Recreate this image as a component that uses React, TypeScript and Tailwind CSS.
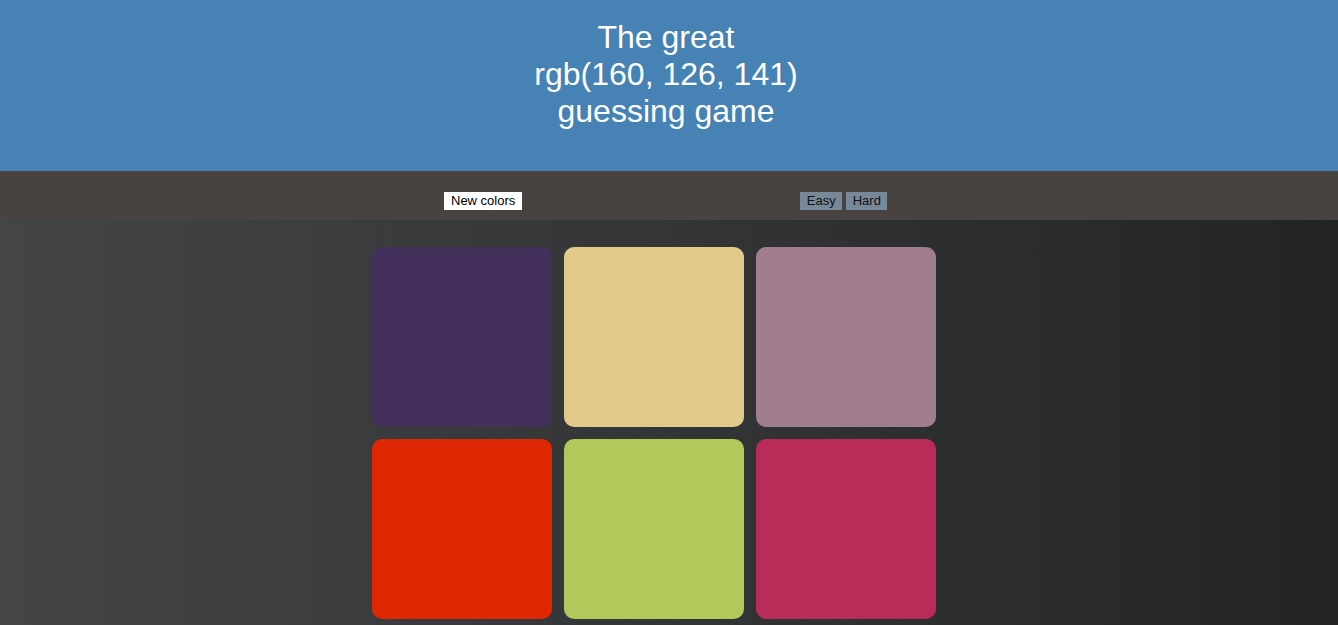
const squares = ["#43315b", "#e2ca8a", "#a07e8d", "#df2704", "#b1c85b", "#b92c58"];

const App = () => {
  return (
    <div className="min-h-[625px] font-['Liberation_Sans',Arial,sans-serif] bg-[linear-gradient(to_right,#444546,#232426)]">
      <header className="h-[171px] bg-[#4682b4] pr-[6px] pt-[19px] text-center text-[32px] leading-[37px] text-white">
        <h1>The great</h1>
        <h1>rgb(160, 126, 141)</h1>
        <h1>guessing game</h1>
      </header>
      <nav className="flex h-[49px] items-start bg-[#484241] pl-[444px] pt-[21px]">
        <button className="h-[18px] bg-white px-[7px] text-[13px] leading-[18px] text-black">New colors</button>
        <div className="ml-[278px] flex gap-[4px]">
          <button className="h-[18px] bg-[#778899] px-[6.5px] text-[13px] leading-[18px] text-[#111]">Easy</button>
          <button className="h-[18px] bg-[#778899] px-[6.5px] text-[13px] leading-[18px] text-[#111]">Hard</button>
        </div>
      </nav>
      <main className="pl-[372px] pt-[27px]">
        <div className="grid w-[564px] grid-cols-3 gap-[12px]">
          {squares.map((c) => (
            <div key={c} className="h-[180px] w-[180px] rounded-[10px]" style={{ backgroundColor: c }} />
          ))}
        </div>
      </main>
    </div>
  );
};

export default App;
